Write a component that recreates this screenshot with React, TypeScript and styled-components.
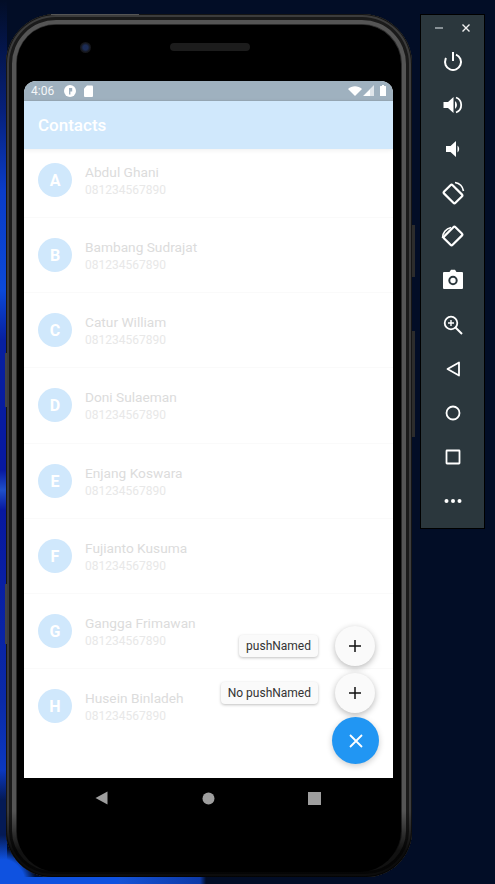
import styled, { createGlobalStyle } from 'styled-components';

const contacts = [
    ['A', 'Abdul Ghani'],
    ['B', 'Bambang Sudrajat'],
    ['C', 'Catur William'],
    ['D', 'Doni Sulaeman'],
    ['E', 'Enjang Koswara'],
    ['F', 'Fujianto Kusuma'],
    ['G', 'Gangga Frimawan'],
    ['H', 'Husein Binladeh'],
];

export default function App() {
    return (
        <>
            <GlobalStyle />
            <Desktop>
                <Phone>
                    <TopEdge />
                    <SideKey $top={339} $height={54} />
                    <SideKey $top={570} $height={60} />
                    <Bezel>
                        <Earpiece>
                            <Camera />
                            <Speaker />
                        </Earpiece>
                        <Screen>
                            <StatusBar>
                                <StatusGroup>
                                    <Clock>4:06</Clock>
                                    <svg width="12" height="12" viewBox="0 0 12 12">
                                        <circle cx="6" cy="6" r="6" fill="#fff" />
                                        <path d="M5 3h3.2v3.4H6.4V9.5H5z" fill="#9fb1bf" />
                                    </svg>
                                    <svg width="9" height="12" viewBox="0 0 9 12" style={{ marginLeft: 8 }}>
                                        <path d="M3 0.5h5a1 1 0 0 1 1 1v9.500a1 1 0 0 1-1 1H1a1 1 0 0 1-1-1V3.500z" fill="#fff" />
                                    </svg>
                                </StatusGroup>
                                <StatusGroup>
                                    <svg width="14" height="10" viewBox="0 0 14 10">
                                        <path d="M0 3C4 -0.800 10 -0.800 14 3L7 10z" fill="#fff" />
                                    </svg>
                                    <svg width="11" height="11" viewBox="0 0 11 11" style={{ marginLeft: 1 }}>
                                        <path d="M11 0v11H0z" fill="#dfe5ea" />
                                        <path d="M7 4.500V11H0.500z" fill="#fff" />
                                    </svg>
                                    <svg width="6" height="11" viewBox="0 0 6 11" style={{ marginLeft: 6 }}>
                                        <path d="M2 0h2v1h1.500a.5.5 0 0 1 .5.5V11H0V1.500a.5.5 0 0 1 .5-.5H2z" fill="#fff" />
                                    </svg>
                                </StatusGroup>
                            </StatusBar>
                            <AppBar>Contacts</AppBar>
                            <ContactList>
                                {contacts.map(([letter, name]) => (
                                    <ContactRow key={letter}>
                                        <Avatar>{letter}</Avatar>
                                        <ContactText>
                                            <ContactName>{name}</ContactName>
                                            <ContactPhone>081234567890</ContactPhone>
                                        </ContactText>
                                    </ContactRow>
                                ))}
                            </ContactList>
                            <FabMenu>
                                <FabRow>
                                    <FabLabel>pushNamed</FabLabel>
                                    <MiniFab>
                                        <PlusIcon />
                                    </MiniFab>
                                </FabRow>
                                <FabRow>
                                    <FabLabel>No pushNamed</FabLabel>
                                    <MiniFab>
                                        <PlusIcon />
                                    </MiniFab>
                                </FabRow>
                                <MainFab>
                                    <svg width="14" height="14" viewBox="0 0 14 14">
                                        <path d="M1 1l12 12M13 1L1 13" stroke="#fff" strokeWidth="1.800" />
                                    </svg>
                                </MainFab>
                            </FabMenu>
                        </Screen>
                        <NavBar>
                            <svg width="13" height="14" viewBox="0 0 13 14">
                                <path d="M12.500 0.500v13L0.500 7z" fill="#9e9e9e" />
                            </svg>
                            <svg width="13" height="13" viewBox="0 0 13 13">
                                <circle cx="6.500" cy="6.500" r="6" fill="#9e9e9e" />
                            </svg>
                            <svg width="13" height="13" viewBox="0 0 13 13">
                                <rect width="13" height="13" fill="#9e9e9e" />
                            </svg>
                        </NavBar>
                    </Bezel>
                    <RightKey $top={211} $height={52} />
                    <RightKey $top={317} $height={106} />
                </Phone>
                <Toolbar>
                    <WindowControls>
                        <svg width="8" height="8" viewBox="0 0 8 8">
                            <path d="M0 4h8" stroke="#a9b1b5" strokeWidth="1.500" />
                        </svg>
                        <svg width="8" height="8" viewBox="0 0 8 8">
                            <path d="M0.500 0.500l7 7M7.500 0.500l-7 7" stroke="#f2f2f2" strokeWidth="1.400" />
                        </svg>
                    </WindowControls>
                    <ToolIcon>
                        <circle cx="12" cy="13" r="8" fill="none" stroke="#fff" strokeWidth="2" strokeDasharray="38.500 11.800" transform="rotate(-68 12 13)" />
                        <path d="M12 3v9" stroke="#fff" strokeWidth="2" />
                    </ToolIcon>
                    <ToolIcon>
                        <path d="M2.500 9v6H7l5.500 5V4L7 9z" fill="#fff" />
                        <path d="M14 8a5 5 0 0 1 0 8z" fill="#fff" />
                        <path d="M15 4.500a8 8 0 0 1 0 15" fill="none" stroke="#fff" strokeWidth="1.800" />
                    </ToolIcon>
                    <ToolIcon>
                        <path d="M5 9v6h4.500l5.500 5V4L9.500 9z" fill="#fff" />
                        <path d="M16.500 8.500a4.500 4.500 0 0 1 0 7z" fill="#fff" />
                    </ToolIcon>
                    <ToolIcon>
                        <rect x="6" y="5" width="12" height="16" rx="1.500" transform="rotate(-45 12 13)" fill="none" stroke="#fff" strokeWidth="2.200" />
                        <path d="M14 1.500a10.500 10.500 0 0 1 8.500 8.500" fill="none" stroke="#fff" strokeWidth="1.600" />
                    </ToolIcon>
                    <ToolIcon>
                        <rect x="6" y="3" width="12" height="16" rx="1.500" transform="rotate(45 12 11)" fill="none" stroke="#fff" strokeWidth="2.200" />
                        <path d="M1.500 13a10.500 10.500 0 0 1 8.500 -10.500" fill="none" stroke="#fff" strokeWidth="1.600" />
                    </ToolIcon>
                    <ToolIcon>
                        <path d="M8.500 3l1.500-2.200h4L15.500 3H21a1 1 0 0 1 1 1v15a1 1 0 0 1-1 1H3a1 1 0 0 1-1-1V4a1 1 0 0 1 1-1z" fill="#fff" />
                        <circle cx="12" cy="11.500" r="3.700" fill="none" stroke="#2b373d" strokeWidth="2" />
                    </ToolIcon>
                    <ToolIcon>
                        <circle cx="10" cy="10" r="6.300" fill="none" stroke="#fff" strokeWidth="1.800" />
                        <path d="M14.500 14.500l6.500 6.500" stroke="#fff" strokeWidth="2" />
                        <path d="M10 7v6M7 10h6" stroke="#fff" strokeWidth="1.400" />
                    </ToolIcon>
                    <ToolIcon>
                        <path d="M18 5.500v13L6.500 12z" fill="none" stroke="#fff" strokeWidth="1.800" strokeLinejoin="round" />
                    </ToolIcon>
                    <ToolIcon>
                        <circle cx="12" cy="12" r="6.500" fill="none" stroke="#fff" strokeWidth="1.800" />
                    </ToolIcon>
                    <ToolIcon>
                        <rect x="5.500" y="5.500" width="13" height="13" rx="0.500" fill="none" stroke="#fff" strokeWidth="1.800" />
                    </ToolIcon>
                    <ToolIcon>
                        <circle cx="5.500" cy="12" r="2" fill="#fff" />
                        <circle cx="12" cy="12" r="2" fill="#fff" />
                        <circle cx="18.500" cy="12" r="2" fill="#fff" />
                    </ToolIcon>
                </Toolbar>
            </Desktop>
        </>
    );
}

function PlusIcon() {
    return (
        <svg width="12" height="12" viewBox="0 0 12 12">
            <path d="M6 0v12M0 6h12" stroke="#111" strokeWidth="1.500" />
        </svg>
    );
}

const GlobalStyle = createGlobalStyle`
    html, body {
        margin: 0;
        padding: 0;
        background: #020d26;
    }
    * {
        box-sizing: border-box;
    }
`;

const Desktop = styled.div`
    width: 495px;
    height: 884px;
    overflow: hidden;
    display: flex;
    align-items: flex-start;
    padding: 14px 0 0 6px;
    font-family: Roboto, 'Liberation Sans', sans-serif;
    background:
        linear-gradient(90deg, #0f52e0 0, #0f52e0 118px, #1553d6 120px, #0d3aa8 200px, transparent 206px) 0 877px / 100% 7px no-repeat,
        linear-gradient(
                180deg,
                #020d26 0,
                #06207a 110px,
                #0a3cc8 190px,
                #0b49d8 290px,
                #0720a0 340px,
                #0718a0 470px,
                #1f50c8 490px,
                #0718a0 510px,
                #0a2aa8 700px,
                #0b38c0 770px,
                #041a55 800px,
                #041a55 835px,
                #0f52e0 860px,
                #0f52e0 100%
            )
            0 0 / 7px 100% no-repeat,
        radial-gradient(ellipse 36px 36px at 0 884px, #0f52e0 0 70%, transparent 100%),
        #020d26;
`;

const Phone = styled.div`
    position: relative;
    flex: none;
    width: 406px;
    height: 863px;
    padding: 11px 12px 5px 11px;
    border-radius: 50px 50px 46px 46px;
    background: #000;
    box-shadow:
        inset 0 0 0 1px #151515,
        inset 0 0 0 3px #3c3c3c,
        inset 0 0 0 6px #1a1a1a,
        inset 0 0 0 10px #555,
        inset 0 0 0 11px #2a2a2a;

    /* the rim falls into shadow towards the bottom of the body */
    &::after {
        content: '';
        position: absolute;
        left: 0;
        right: 0;
        bottom: 0;
        height: 66px;
        border-radius: 0 0 46px 46px;
        background: linear-gradient(180deg, rgba(0, 0, 0, 0), rgba(0, 0, 0, 0.8) 60%);
        pointer-events: none;
    }
`;

const TopEdge = styled.div`
    position: absolute;
    top: 0;
    left: 45px;
    width: 88px;
    height: 1px;
    background: #555;
`;

const SideKey = styled.div<{ $top: number; $height: number }>`
    position: absolute;
    left: -1px;
    top: ${({ $top }) => $top}px;
    width: 2px;
    height: ${({ $height }) => $height}px;
    background: #3f4146;
`;

const RightKey = styled.div<{ $top: number; $height: number }>`
    position: absolute;
    right: -3px;
    top: ${({ $top }) => $top}px;
    width: 3px;
    height: ${({ $height }) => $height}px;
    background: #2c2c2c;
`;

const Bezel = styled.div`
    height: 100%;
    padding: 0 7px;
    display: flex;
    flex-direction: column;
    border-radius: 38px 38px 40px 40px;
    background: #000;
`;

const Earpiece = styled.div`
    flex: none;
    height: 56px;
    display: flex;
    align-items: center;
    padding: 0 0 12px 56px;
`;

const Camera = styled.div`
    width: 11px;
    height: 11px;
    border-radius: 50%;
    background: radial-gradient(circle, #1c2c55 0 30%, #15161a 60%);
`;

const Speaker = styled.div`
    width: 80px;
    height: 8px;
    margin-left: 79px;
    border-radius: 4px;
    background: #1c1c1c;
`;

const Screen = styled.div`
    position: relative;
    flex: none;
    width: 369px;
    height: 697px;
    display: flex;
    flex-direction: column;
    background: #fff;
    border-radius: 12px 12px 0 0;
    overflow: hidden;
`;

const StatusBar = styled.div`
    flex: none;
    height: 20px;
    padding: 0 7px;
    display: flex;
    align-items: center;
    justify-content: space-between;
    background: #9fb1bf;
    border-bottom: 1px solid #97a9b6;
`;

const StatusGroup = styled.div`
    display: flex;
    align-items: center;
`;

const Clock = styled.span`
    width: 33px;
    font-size: 12px;
    color: #f4f6f8;
`;

const AppBar = styled.div`
    flex: none;
    height: 48px;
    padding-left: 14px;
    display: flex;
    align-items: center;
    font-size: 17px;
    font-weight: 500;
    color: #fff;
    background: #d0e8fc;
    box-shadow: 0 1px 5px rgba(0, 0, 0, 0.07);
    z-index: 1;
`;

const ContactList = styled.div`
    display: flex;
    flex-direction: column;
`;

const ContactRow = styled.div`
    height: 75px;
    padding: 20px 14px 0;
    display: flex;
    gap: 13px;
    border-bottom: 1px solid #fafafa;

    &:first-child {
        height: 69px;
        padding-top: 14px;
    }

    &:nth-child(4) {
        height: 76px;
    }

    &:last-child {
        border-bottom: none;
    }
`;

const Avatar = styled.div`
    flex: none;
    width: 34px;
    height: 34px;
    display: flex;
    align-items: center;
    justify-content: center;
    border-radius: 50%;
    font-size: 16px;
    font-weight: 700;
    color: #fff;
    background: #d0e8fc;
`;

const ContactText = styled.div`
    display: flex;
    flex-direction: column;
    gap: 3px;
    margin-top: 1px;
`;

const ContactName = styled.div`
    font-size: 13.7px;
    line-height: 16px;
    color: #dcdcdc;
`;

const ContactPhone = styled.div`
    font-size: 12px;
    line-height: 14px;
    color: #e8e8e8;
`;

const FabMenu = styled.div`
    position: absolute;
    right: 14px;
    bottom: 14px;
    display: flex;
    flex-direction: column;
    align-items: flex-end;
`;

const FabRow = styled.div`
    height: 47px;
    padding-right: 4px;
    display: flex;
    align-items: center;
    gap: 17px;
`;

const FabLabel = styled.div`
    height: 22px;
    padding: 0 7px;
    display: flex;
    align-items: center;
    font-size: 12px;
    color: #333;
    background: #fafafa;
    border-radius: 4px;
    box-shadow: 0 1px 3px rgba(0, 0, 0, 0.25);
`;

const MiniFab = styled.div`
    width: 40px;
    height: 40px;
    display: flex;
    align-items: center;
    justify-content: center;
    border-radius: 50%;
    background: #fafafa;
    box-shadow: 0 2px 6px rgba(0, 0, 0, 0.28);
`;

const MainFab = styled.div`
    width: 47px;
    height: 47px;
    margin-top: 1px;
    display: flex;
    align-items: center;
    justify-content: center;
    border-radius: 50%;
    background: #2196f3;
    box-shadow: 0 2px 6px rgba(0, 0, 0, 0.2);
`;

const NavBar = styled.div`
    flex: none;
    height: 40px;
    padding: 0 72px 0 71px;
    display: flex;
    align-items: center;
    justify-content: space-between;
`;

const Toolbar = styled.div`
    flex: none;
    width: 65px;
    height: 515px;
    margin: 0 0 0 8px;
    padding: 3px 0 0;
    display: flex;
    flex-direction: column;
    align-items: center;
    background: #2b373d;
    border: 1px solid #000;
`;

const WindowControls = styled.div`
    flex: none;
    width: 100%;
    height: 20px;
    padding: 0 14px 0 14px;
    display: flex;
    align-items: center;
    justify-content: space-between;
    margin-bottom: 11px;
`;

const ToolIcon = styled.svg.attrs({ viewBox: '0 0 24 24', width: 24, height: 24 })`
    flex: none;
    margin-bottom: 20px;

    &:last-child {
        margin-bottom: 0;
    }
`;
